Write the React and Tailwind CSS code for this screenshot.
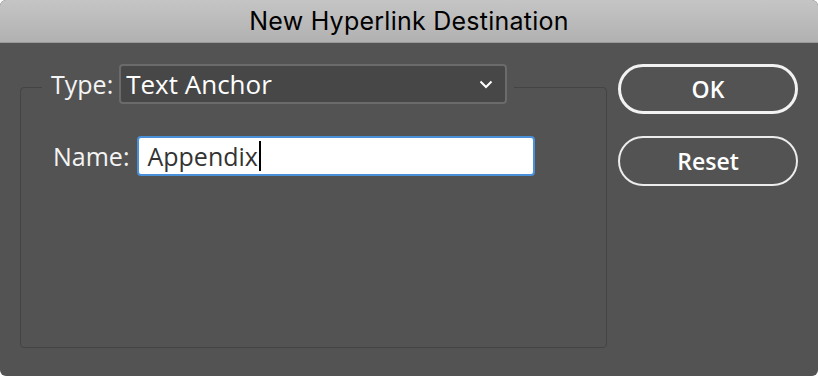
export default function App() {
  return (
    <div className="h-[376px] w-[818px] bg-white">
      <div className="flex h-full w-full flex-col overflow-hidden rounded-[6px] bg-[#535353]">
        {/* Title bar */}
        <div className="flex h-[43px] shrink-0 items-center justify-center border-b border-[#9a9a9a] bg-gradient-to-b from-[#c6c5c6] to-[#b2b1b2]">
          <span className="text-[25px] leading-none tracking-[0.01em] text-black" style={{ fontFamily: 'Inter, "Liberation Sans", sans-serif' }}>
            New Hyperlink Destination
          </span>
        </div>

        {/* Body */}
        <div className="flex flex-1 px-[20px] pt-[21px]" style={{ fontFamily: '"Open Sans", "Noto Sans", sans-serif' }}>
          <div className="relative mt-[23px] h-[261px] w-[587px] rounded-[4px] border border-[#444444]">
            <div className="absolute -top-[24px] left-[21px] flex items-center gap-[6px] bg-[#535353] pl-[9px] pr-[7px]">
              <span className="text-[25px] leading-none text-[#f4f4f4]">Type:</span>
              <div className="flex h-[40px] w-[388px] items-center justify-between rounded-[4px] border-2 border-[#6b6b6b] bg-[#474747] pl-[5px] pr-[12px]">
                <span className="text-[26px] leading-none text-white">Text Anchor</span>
                <svg width="14" height="9" viewBox="0 0 14 9" fill="none">
                  <path d="M1.5 1.5 L7 7 L12.5 1.5" stroke="white" strokeWidth="2" />
                </svg>
              </div>
            </div>

            <div className="ml-[32px] mt-[48px] flex items-center gap-[8px]">
              <span className="text-[25px] leading-none text-[#f4f4f4]">Name:</span>
              <div className="flex h-[40px] w-[398px] items-center rounded-[4px] border-2 border-[#4a90d9] bg-white pl-[8px]">
                <span className="text-[25px] leading-none text-[#333333]">Appendix</span>
                <div className="ml-[1px] h-[30px] w-[2px] bg-black" />
              </div>
            </div>
          </div>

          <div className="ml-[11px] flex flex-col gap-[22px]">
            <button className="h-[50px] w-[180px] rounded-full border-[3px] border-[#f2f2f2] text-[23px] font-semibold text-white">
              OK
            </button>
            <button className="h-[50px] w-[180px] rounded-full border-2 border-[#ececec] text-[23px] font-semibold text-white">
              Reset
            </button>
          </div>
        </div>
      </div>
    </div>
  );
}
